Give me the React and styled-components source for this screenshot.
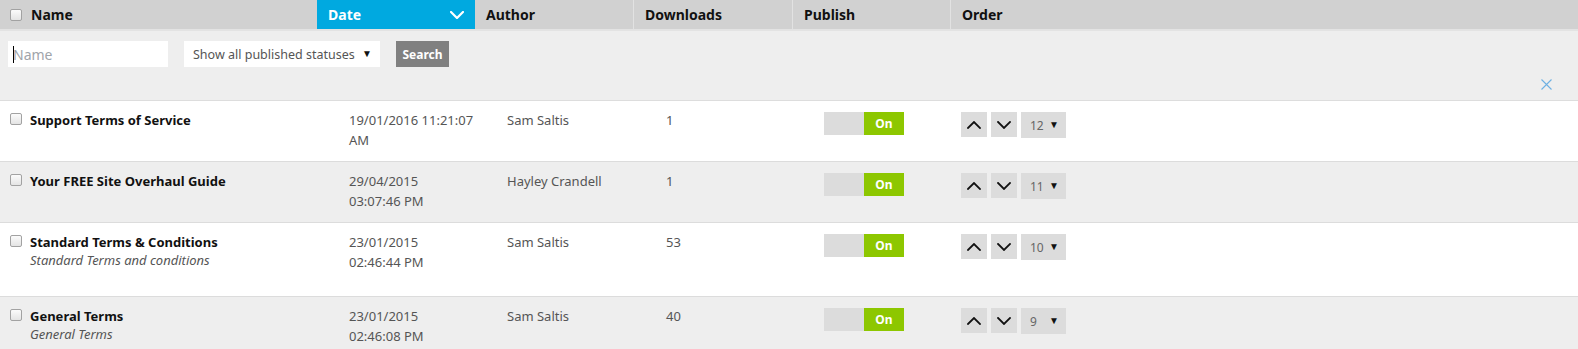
import React from "react";
import styled, { createGlobalStyle } from "styled-components";

const Global = createGlobalStyle`
  html, body { margin: 0; padding: 0; background: #fff; }
  body { font-family: "Noto Sans", "Liberation Sans", sans-serif; color: #222; }
  * { box-sizing: border-box; }
`;

const COLS = "317px 158px 158px 159px 158px 1fr";

const Page = styled.div`
  width: 1578px;
`;

const HeaderRow = styled.div`
  display: grid;
  grid-template-columns: ${COLS};
  height: 31px;
  background: #d1d1d1;
  border-bottom: 2px solid #e3e3e3;
`;

const HeadCell = styled.div`
  display: flex;
  align-items: center;
  gap: 9px;
  padding: 0 11px 0 ${(p) => (p.$first ? "10px" : "11px")};
  font-size: 14px;
  font-weight: 700;
  color: ${(p) => (p.$active ? "#fff" : "#111")};
  background: ${(p) => (p.$active ? "#00a9e0" : "transparent")};
  border-left: ${(p) => (p.$first || p.$active || p.$afterActive ? "none" : "1px solid #e2e2e2")};
  justify-content: ${(p) => (p.$active ? "space-between" : "flex-start")};
`;

const Check = styled.span`
  display: inline-block;
  flex: none;
  width: 12px;
  height: 12px;
  border: 1px solid #a2a2a2;
  border-radius: 2px;
  background: linear-gradient(#fbfbfb, #e4e4e4);
  margin-top: ${(p) => p.$mt || 0}px;
`;

const Filters = styled.div`
  background: #eeeeee;
  border-bottom: 1px solid #dddddd;
  padding: 10px 26px 11px 8px;
  display: flex;
  flex-direction: column;
`;

const FilterBar = styled.div`
  display: flex;
  gap: 16px;
  height: 26px;
`;

const InputWrap = styled.div`
  position: relative;
  width: 160px;
  height: 26px;
  &::before {
    content: "";
    position: absolute;
    left: 5px;
    top: 5px;
    width: 1px;
    height: 17px;
    background: #000;
  }
`;

const NameInput = styled.input`
  width: 100%;
  height: 100%;
  border: none;
  outline: none;
  background: #fff;
  padding: 0 5px;
  font-family: inherit;
  font-size: 14px;
  color: #333;
  caret-color: #000;
  &::placeholder { color: #a0a4aa; }
`;

const SelectBox = styled.div`
  width: 196px;
  height: 26px;
  background: #fff;
  display: flex;
  align-items: center;
  justify-content: space-between;
  padding: 0 8px 0 9px;
  font-size: 12.5px;
  white-space: nowrap;
  color: #555;
`;

const Arrow = styled.span`
  font-size: 10px;
  color: #111;
  margin-top: -3px;
`;

const SearchButton = styled.button`
  width: 53px;
  height: 26px;
  border: none;
  background: #808080;
  color: #fff;
  font-family: inherit;
  font-size: 12px;
  font-weight: 700;
  padding: 0;
`;

const CloseRow = styled.div`
  display: flex;
  justify-content: flex-end;
  margin-top: 12px;
  height: 10px;
`;

const Row = styled.div`
  display: grid;
  grid-template-columns: ${COLS};
  background: ${(p) => (p.$alt ? "#eeeeee" : "#fff")};
  border-bottom: 1px solid #dcdcdc;
  padding: 9px 0 11px;
`;

const NameCell = styled.div`
  display: flex;
  gap: 8px;
  padding-left: 10px;
`;

const NameText = styled.div`
  display: flex;
  flex-direction: column;
`;

const Title = styled.div`
  font-size: 13px;
  font-weight: 700;
  line-height: 20px;
  color: #111;
`;

const Subtitle = styled.div`
  font-size: 13px;
  font-style: italic;
  line-height: 16px;
  color: #555;
  margin-bottom: 17px;
`;

const TextCell = styled.div`
  padding-left: ${(p) => p.$pl || 32}px;
  font-size: 13px;
  line-height: 20px;
  color: #555;
`;

const Line = styled.div``;

const PublishCell = styled.div`
  padding: 2px 0 0 32px;
`;

const Toggle = styled.div`
  display: flex;
  width: 80px;
  height: 23px;
  background: #dcdcdc;
`;

const ToggleOn = styled.div`
  margin-left: auto;
  width: 40px;
  height: 100%;
  background: #8dc700;
  color: #fff;
  font-size: 12px;
  font-weight: 700;
  display: flex;
  align-items: center;
  justify-content: center;
`;

const OrderCell = styled.div`
  display: flex;
  gap: 4px;
  padding: 2px 0 0 11px;
  align-items: flex-start;
`;

const OrderButton = styled.button`
  width: 26px;
  height: 25px;
  border: none;
  padding: 0;
  background: #dcdcdc;
  display: flex;
  align-items: center;
  justify-content: center;
`;

const OrderSelect = styled.div`
  width: 45px;
  height: 26px;
  background: #dcdcdc;
  display: flex;
  align-items: center;
  justify-content: space-between;
  padding: 0 7px 0 9px;
  font-size: 12px;
  color: #666;
`;

const Chevron = ({ up, color = "#111", w = 14, h = 8, sw = 1.8 }) => (
  <svg width={w} height={h} viewBox="0 0 14 8" fill="none">
    <path
      d={up ? "M1 7L7 1L13 7" : "M1 1L7 7L13 1"}
      stroke={color}
      strokeWidth={sw}
      strokeLinecap="square"
    />
  </svg>
);

const rows = [
  { title: "Support Terms of Service", date: ["19/01/2016 11:21:07", "AM"], author: "Sam Saltis", downloads: "1", order: 12 },
  { title: "Your FREE Site Overhaul Guide", date: ["29/04/2015", "03:07:46 PM"], author: "Hayley Crandell", downloads: "1", order: 11 },
  { title: "Standard Terms & Conditions", sub: "Standard Terms and conditions", date: ["23/01/2015", "02:46:44 PM"], author: "Sam Saltis", downloads: "53", order: 10 },
  { title: "General Terms", sub: "General Terms", date: ["23/01/2015", "02:46:08 PM"], author: "Sam Saltis", downloads: "40", order: 9 },
];

export default function App() {
  return (
    <Page>
      <Global />
      <HeaderRow>
        <HeadCell $first>
          <Check />
          Name
        </HeadCell>
        <HeadCell $active>
          Date
          <Chevron color="#fff" w={14} h={8} sw={2.2} />
        </HeadCell>
        <HeadCell $afterActive>Author</HeadCell>
        <HeadCell>Downloads</HeadCell>
        <HeadCell>Publish</HeadCell>
        <HeadCell>Order</HeadCell>
      </HeaderRow>
      <Filters>
        <FilterBar>
          <InputWrap>
            <NameInput placeholder="Name" />
          </InputWrap>
          <SelectBox>
            Show all published statuses
            <Arrow>▼</Arrow>
          </SelectBox>
          <SearchButton>Search</SearchButton>
        </FilterBar>
        <CloseRow>
          <svg width="11" height="11" viewBox="0 0 11 11">
            <path d="M0.5 0.5L10.5 10.5M10.5 0.5L0.5 10.5" stroke="#6eb1e3" strokeWidth="1.1" />
          </svg>
        </CloseRow>
      </Filters>
      {rows.map((r, i) => (
        <Row key={r.title} $alt={i % 2 === 1}>
          <NameCell>
            <Check $mt={3} />
            <NameText>
              <Title>{r.title}</Title>
              {r.sub && <Subtitle>{r.sub}</Subtitle>}
            </NameText>
          </NameCell>
          <TextCell>
            {r.date.map((l) => (
              <Line key={l}>{l}</Line>
            ))}
          </TextCell>
          <TextCell>{r.author}</TextCell>
          <TextCell $pl={33}>{r.downloads}</TextCell>
          <PublishCell>
            <Toggle>
              <ToggleOn>On</ToggleOn>
            </Toggle>
          </PublishCell>
          <OrderCell>
            <OrderButton aria-label="Move up">
              <Chevron up />
            </OrderButton>
            <OrderButton aria-label="Move down">
              <Chevron />
            </OrderButton>
            <OrderSelect>
              {r.order}
              <Arrow>▼</Arrow>
            </OrderSelect>
          </OrderCell>
        </Row>
      ))}
    </Page>
  );
}
